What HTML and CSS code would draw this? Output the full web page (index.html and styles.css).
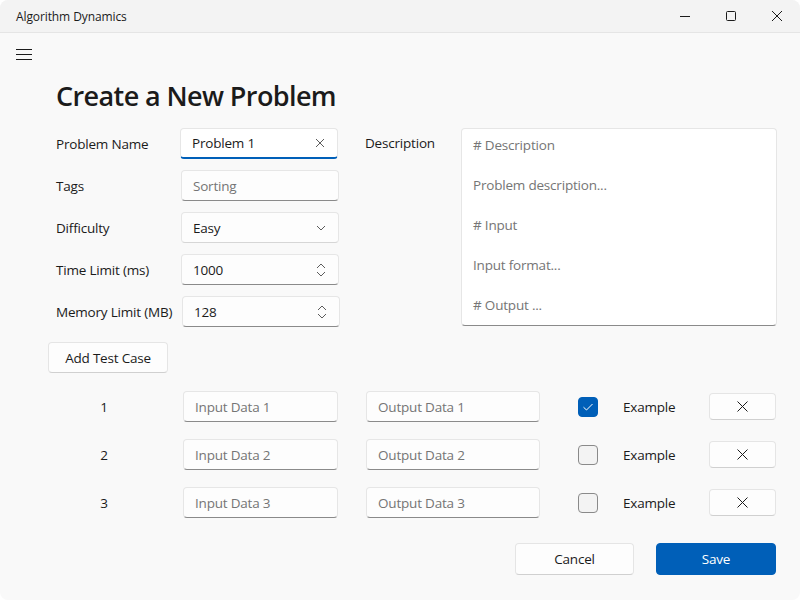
FILE: index.html
```html
<!DOCTYPE html>
<html lang="en">
<head>
<meta charset="utf-8">
<title>Algorithm Dynamics</title>
<link rel="stylesheet" href="styles.css">
</head>
<body>
<div class="window">
  <header class="titlebar">
    <span class="app-title">Algorithm Dynamics</span>
    <div class="caption">
      <span class="cap-btn"><svg width="10" height="10" viewBox="0 0 10 10"><path d="M0 5.5h10" stroke="#1b1b1b" stroke-width="1"/></svg></span>
      <span class="cap-btn"><svg width="10" height="10" viewBox="0 0 10 10"><rect x="0.5" y="0.5" width="9" height="9" rx="1" fill="none" stroke="#1b1b1b" stroke-width="1"/></svg></span>
      <span class="cap-btn"><svg width="10" height="10" viewBox="0 0 10 10"><path d="M0 0L10 10M10 0L0 10" stroke="#1b1b1b" stroke-width="1"/></svg></span>
    </div>
  </header>

  <div class="nav">
    <svg width="16" height="12" viewBox="0 0 16 12"><path d="M0 0.5h16M0 5.5h16M0 10.5h16" stroke="#1b1b1b" stroke-width="1"/></svg>
  </div>

  <main class="page">
    <h1 class="heading">Create a New Problem</h1>

    <section class="form">
      <div class="fields">
        <label class="lbl">Problem Name</label>
        <div class="box focused"><span class="val">Problem 1</span>
          <svg class="ico" width="10" height="10" viewBox="0 0 10 10"><path d="M1 1L9 9M9 1L1 9" stroke="#5c5c5c" stroke-width="1"/></svg>
        </div>

        <label class="lbl">Tags</label>
        <div class="box nudge"><span class="ph">Sorting</span></div>

        <label class="lbl">Difficulty</label>
        <div class="box combo nudge"><span class="val">Easy</span>
          <svg class="ico" width="10" height="6" viewBox="0 0 10 6"><path d="M1 1L5 5L9 1" fill="none" stroke="#5c5c5c" stroke-width="1"/></svg>
        </div>

        <label class="lbl">Time Limit (ms)</label>
        <div class="box nudge"><span class="val">1000</span>
          <svg class="ico" width="10" height="14" viewBox="0 0 10 14"><path d="M1 5L5 1L9 5M1 9L5 13L9 9" fill="none" stroke="#5c5c5c" stroke-width="1"/></svg>
        </div>

        <label class="lbl">Memory Limit (MB)</label>
        <div class="box shift"><span class="val">128</span>
          <svg class="ico" width="10" height="14" viewBox="0 0 10 14"><path d="M1 5L5 1L9 5M1 9L5 13L9 9" fill="none" stroke="#5c5c5c" stroke-width="1"/></svg>
        </div>
      </div>

      <div class="desc">
        <label class="lbl desc-lbl">Description</label>
        <div class="textarea">
          <p># Description</p>
          <p>Problem description...</p>
          <p># Input</p>
          <p>Input format...</p>
          <p># Output ...</p>
        </div>
      </div>
    </section>

    <button class="btn add">Add Test Case</button>

    <section class="cases">
      <div class="case">
        <span class="num">1</span>
        <div class="box in"><span class="ph">Input Data 1</span></div>
        <div class="box out"><span class="ph">Output Data 1</span></div>
        <span class="check on"><svg width="12" height="10" viewBox="0 0 12 10"><path d="M1.5 5.2L4.5 8L10.5 2" fill="none" stroke="#fff" stroke-width="1"/></svg></span>
        <span class="ex">Example</span>
        <button class="btn del"><svg width="11" height="11" viewBox="0 0 11 11"><path d="M0.5 0.5L10.5 10.5M10.5 0.5L0.5 10.5" stroke="#1b1b1b" stroke-width="1"/></svg></button>
      </div>
      <div class="case">
        <span class="num">2</span>
        <div class="box in"><span class="ph">Input Data 2</span></div>
        <div class="box out"><span class="ph">Output Data 2</span></div>
        <span class="check"></span>
        <span class="ex">Example</span>
        <button class="btn del"><svg width="11" height="11" viewBox="0 0 11 11"><path d="M0.5 0.5L10.5 10.5M10.5 0.5L0.5 10.5" stroke="#1b1b1b" stroke-width="1"/></svg></button>
      </div>
      <div class="case">
        <span class="num">3</span>
        <div class="box in"><span class="ph">Input Data 3</span></div>
        <div class="box out"><span class="ph">Output Data 3</span></div>
        <span class="check"></span>
        <span class="ex">Example</span>
        <button class="btn del"><svg width="11" height="11" viewBox="0 0 11 11"><path d="M0.5 0.5L10.5 10.5M10.5 0.5L0.5 10.5" stroke="#1b1b1b" stroke-width="1"/></svg></button>
      </div>
    </section>

    <footer class="actions">
      <button class="btn cancel">Cancel</button>
      <button class="btn save">Save</button>
    </footer>
  </main>
</div>
</body>
</html>
```

FILE: styles.css
```css
* { box-sizing: border-box; }
html, body { margin: 0; padding: 0; }
body {
  width: 800px;
  height: 600px;
  background: #ffffff;
  font-family: "Open Sans", "Noto Sans", sans-serif;
  font-size: 14px;
  color: #1b1b1b;
  overflow: hidden;
}
.window {
  width: 800px;
  height: 600px;
  background: #f9f9f9;
  border-radius: 8px;
  overflow: hidden;
  display: flex;
  flex-direction: column;
}
.titlebar {
  height: 33px;
  flex: none;
  background: #f3f3f3;
  border-bottom: 1px solid #e5e5e5;
  display: flex;
  align-items: center;
  justify-content: space-between;
  padding-left: 16px;
}
.app-title { font-size: 12px; letter-spacing: -0.1px; }
.caption { display: flex; height: 100%; }
.cap-btn {
  width: 46px;
  display: flex;
  align-items: center;
  justify-content: center;
}
.nav {
  height: 44px;
  padding: 16px 0 0 16px;
  flex: none;
}
.nav svg { display: block; }
.page {
  padding: 0 24px 0 48px;
  flex: 1;
  display: flex;
  flex-direction: column;
}
.heading {
  margin: 1px 0 14px 8px;
  font-size: 27px;
  line-height: 36px;
  font-weight: 600;
  letter-spacing: -0.6px;
}
.form {
  display: flex;
  margin-left: 8px;
}
.fields {
  display: grid;
  grid-template-columns: 124px 158px;
  grid-auto-rows: 31px;
  row-gap: 11px;
  align-items: center;
}
.lbl { font-size: 13.5px; letter-spacing: -0.2px; }
.box {
  height: 31px;
  background: #fdfdfd;
  border: 1px solid #e6e6e6;
  border-bottom-color: #8a8a8a;
  border-radius: 4px;
  display: flex;
  align-items: center;
  justify-content: space-between;
  padding: 0 12px 0 11px;
  font-size: 13.5px;
  letter-spacing: -0.2px;
}
.box.focused {
  background: #ffffff;
  border-bottom: 2px solid #005fb8;
}
.box.combo { border-bottom-color: #d6d6d6; }
.box.nudge { margin-left: 1px; width: 158px; }
.box.shift { margin-left: 2px; width: 158px; }
.box .ico { flex: none; }
.ph { color: #757575; }
.desc {
  display: flex;
  margin-left: 27px;
  align-items: flex-start;
}
.desc-lbl { width: 96px; margin-top: 6px; }
.textarea {
  width: 316px;
  height: 198px;
  background: #ffffff;
  border: 1px solid #e6e6e6;
  border-bottom-color: #8a8a8a;
  border-radius: 4px;
  padding: 6px 11px;
  color: #757575;
  font-size: 13.5px;
  letter-spacing: -0.2px;
}
.textarea p { margin: 0; height: 40px; line-height: 20px; }
.btn {
  font-family: inherit;
  font-size: 13.5px;
  letter-spacing: -0.2px;
  color: #1b1b1b;
  background: #fdfdfd;
  border: 1px solid #e5e5e5;
  border-bottom-color: #d0d0d0;
  border-radius: 4px;
  padding: 0;
  display: flex;
  align-items: center;
  justify-content: center;
}
.add {
  width: 120px;
  height: 31px;
  margin-top: 15px;
}
.cases {
  margin-top: 18px;
  display: flex;
  flex-direction: column;
  gap: 17px;
}
.case {
  display: flex;
  align-items: center;
  height: 31px;
}
.case > * { flex: none; }
.num { width: 112px; text-align: center; font-size: 13.5px; }
.box.in { width: 155px; margin-left: 23px; }
.box.out { width: 174px; margin-left: 28px; }
.check {
  width: 20px;
  height: 20px;
  margin-left: 38px;
  border: 1px solid #8a8a8a;
  border-radius: 4px;
  background: #f3f3f3;
  display: flex;
  align-items: center;
  justify-content: center;
}
.check.on { background: #005fb8; border-color: #005fb8; }
.ex { width: 86px; margin-left: 25px; font-size: 13.5px; letter-spacing: -0.2px; }
.del { width: 67px; height: 27px; }
.actions {
  margin-top: 25px;
  display: flex;
  justify-content: flex-end;
  align-items: center;
  gap: 22px;
}
.cancel { width: 119px; height: 32px; }
.save {
  width: 120px;
  height: 32px;
  background: #005fb8;
  border-color: #005fb8;
  color: #ffffff;
}
```
